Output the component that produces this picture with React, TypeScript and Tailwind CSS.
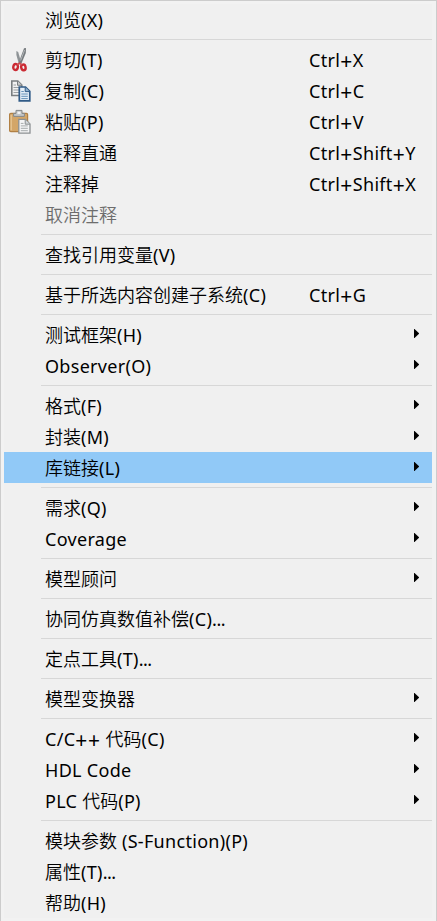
import clsx from "clsx";

interface MenuItem {
  label: string;
  shortcut?: string;
  icon?: React.ReactNode;
  submenu?: boolean;
  disabled?: boolean;
  active?: boolean;
}

const CutIcon = () => (
  <svg width="24" height="26" viewBox="0 0 24 26" fill="none">
    <path d="M8.4 4 L10.2 5 L13.4 16 L11 17.5 L8.4 8Z" fill="#8f9497" />
    <path d="M16 1.3 L18 1 L17.8 6 L13 17.5 L10.3 16.8Z" fill="#777c7f" />
    <path d="M16.6 3 L12.6 13.5" stroke="#b9bdbf" strokeWidth="0.9" />
    <ellipse cx="7.6" cy="20" rx="2.3" ry="3" stroke="#cb2a33" strokeWidth="2.4" transform="rotate(15 7.6 20)" />
    <ellipse cx="15.4" cy="20.4" rx="2.2" ry="2.9" stroke="#cb2a33" strokeWidth="2.4" transform="rotate(-12 15.4 20.4)" />
    <path d="M9 17.8 L11.6 16.2 L14 17.8" stroke="#d04a50" strokeWidth="1.6" />
  </svg>
);

const CopyIcon = () => (
  <svg width="24" height="26" viewBox="0 0 24 26" fill="none">
    <path d="M3.8 3 H9.8 L13.8 7 V17.5 H3.8Z" fill="#f1f1f1" stroke="#7a7e80" strokeWidth="1.6" />
    <path d="M9.5 3 V7.3 H13.8" fill="#c9cbcc" stroke="#7a7e80" />
    <path d="M5.5 7 H8 M5.5 9.5 H11 M5.5 12 H11 M5.5 14.5 H11" stroke="#9ca0a2" />
    <path d="M11.3 9 H17.5 L21.8 13.3 V22.8 H11.3Z" fill="#e4eef7" stroke="#315b87" strokeWidth="1.7" />
    <path d="M17.2 9 V13.6 H21.8" fill="#8fb0cd" stroke="#315b87" />
    <path d="M13.3 13.5 H15.8 M13.3 16 H19.8 M13.3 18.3 H19.8 M13.3 20.6 H19.8" stroke="#6590b8" />
  </svg>
);

const PasteIcon = () => (
  <svg width="24" height="26" viewBox="0 0 24 26" fill="none">
    <rect x="1.6" y="4.4" width="18" height="18.2" rx="1.2" fill="#d3a668" stroke="#b18044" strokeWidth="1.2" />
    <path d="M3.2 5.7 V21.2" stroke="#e6c592" strokeWidth="1.4" />
    <path d="M5.6 7.4 V4.4 H8 V1.4 H14 V4.4 H16.4 V7.4Z" fill="#c2c5c6" stroke="#85898a" />
    <rect x="9.5" y="2.7" width="3" height="2.2" fill="#f3f3f3" />
    <path d="M10.8 10.4 H17.5 L22 14.9 V24.2 H10.8Z" fill="#f4f4f5" stroke="#8c9092" strokeWidth="1.3" />
    <path d="M17.2 10.4 V15.2 H22" fill="#d3d6d8" stroke="#8c9092" />
    <path d="M12.8 14.4 H15.5 M12.8 16.9 H19.8 M12.8 19.3 H19.8 M12.8 21.7 H19.8" stroke="#a6aaac" />
  </svg>
);

const groups: MenuItem[][] = [
  [{ label: "浏览(X)" }],
  [
    { label: "剪切(T)", shortcut: "Ctrl+X", icon: <CutIcon /> },
    { label: "复制(C)", shortcut: "Ctrl+C", icon: <CopyIcon /> },
    { label: "粘贴(P)", shortcut: "Ctrl+V", icon: <PasteIcon /> },
    { label: "注释直通", shortcut: "Ctrl+Shift+Y" },
    { label: "注释掉", shortcut: "Ctrl+Shift+X" },
    { label: "取消注释", disabled: true },
  ],
  [{ label: "查找引用变量(V)" }],
  [{ label: "基于所选内容创建子系统(C)", shortcut: "Ctrl+G" }],
  [
    { label: "测试框架(H)", submenu: true },
    { label: "Observer(O)", submenu: true },
  ],
  [
    { label: "格式(F)", submenu: true },
    { label: "封装(M)", submenu: true },
    { label: "库链接(L)", submenu: true, active: true },
  ],
  [
    { label: "需求(Q)", submenu: true },
    { label: "Coverage", submenu: true },
  ],
  [{ label: "模型顾问", submenu: true }],
  [{ label: "协同仿真数值补偿(C)..." }],
  [{ label: "定点工具(T)..." }],
  [{ label: "模型变换器", submenu: true }],
  [
    { label: "C/C++ 代码(C)", submenu: true },
    { label: "HDL Code", submenu: true },
    { label: "PLC 代码(P)", submenu: true },
  ],
  [
    { label: "模块参数 (S-Function)(P)" },
    { label: "属性(T)..." },
    { label: "帮助(H)" },
  ],
];

const runClass = (run: string) => {
  if (run.startsWith("+")) return "align-[-1.5px] text-[21px] leading-none tracking-[0.6px]";
  if (run === "...") return "tracking-[-0.5px]";
  if (/^[ -~]/.test(run)) return "tracking-[0.3px]";
  return "font-[350]";
};

// Latin runs are set a little wider than the Chinese ones, plus signs most of all
function MenuText({ text }: { text: string }) {
  const runs = text.match(/\++|\.{3}|[ -*,\-/-~]+|[^ -~]+/g) ?? [];
  return (
    <>
      {runs.map((run, i) => (
        <span key={i} className={runClass(run)}>
          {run}
        </span>
      ))}
    </>
  );
}

function MenuRow({ label, shortcut, icon, submenu, disabled, active }: MenuItem) {
  return (
    <div
      role="menuitem"
      className={clsx(
        "flex h-[31px] items-center whitespace-nowrap",
        disabled ? "text-[#6d6d6d]" : "text-black",
        active && "bg-[#91c9f7]"
      )}
    >
      <span className="flex w-10 shrink-0 pl-1">{icon}</span>
      <span className="w-[265px] shrink-0 pt-0.5 pl-px">
        <MenuText text={label} />
      </span>
      <span className="grow pt-0.5">{shortcut && <MenuText text={shortcut} />}</span>
      {submenu && (
        <svg className="mr-[13px] mb-0.5 shrink-0" width="5" height="9" viewBox="0 0 5 9">
          <path d="M0 0 H0.5 L5 4.2 V4.8 L0.5 9 H0Z" fill="#000" />
        </svg>
      )}
    </div>
  );
}

export default function App() {
  return (
    <div
      role="menu"
      className="h-[921px] w-[437px] overflow-hidden border-x border-t border-[#cccccc] bg-[#f2f2f2] px-[3px] pt-[3px] font-['Noto_Sans','Noto_Sans_CJK_SC',sans-serif] text-[18px] leading-[31px]"
    >
      <div className="mr-px bg-[#f0f0f0]">
        {groups.map((items, i) => (
          <div key={i}>
            {i > 0 && (
              <div className="ml-[37px] py-1">
                <div className="h-px bg-[#d7d7d7]" />
              </div>
            )}
            {items.map((item) => (
              <MenuRow key={item.label} {...item} />
            ))}
          </div>
        ))}
      </div>
    </div>
  );
}
